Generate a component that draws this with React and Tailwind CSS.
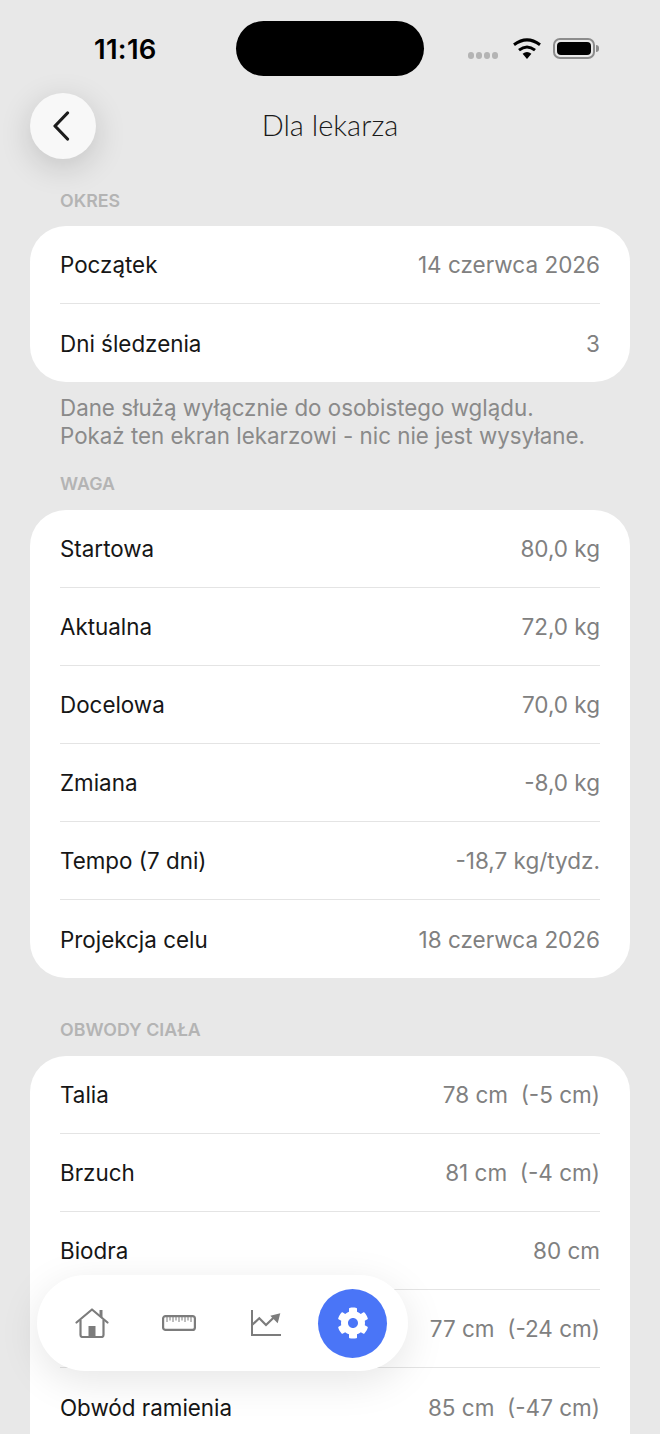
import { FaCog } from 'react-icons/fa'

const Row = ({ label, value, last }) => (
	<div className={`h-[78px] pt-[1px] flex justify-between items-center ${last ? '' : 'border-b border-[#e4e4e4]'}`}>
		<span className='text-[22.4px] text-[#161616]'>{label}</span>
		<span className='text-[22.5px] text-[#808080] whitespace-pre'>{value}</span>
	</div>
)

const Card = ({ rows, open }) => (
	<div className={`mx-[30px] px-[30px] bg-white ${open ? 'rounded-t-[36px]' : 'rounded-[36px]'}`}>
		{rows.map((r, i) => (
			<Row key={r[0]} label={r[0]} value={r[1]} last={i === rows.length - 1} />
		))}
	</div>
)

const Label = ({ children, className }) => (
	<div className={`px-[60px] text-[17.8px] leading-[20px] font-semibold text-[#b4b4b4] ${className}`}>{children}</div>
)

const HomeIcon = () => (
	<svg width='34' height='30' viewBox='0 0 34 30' fill='none'>
		<path d='M1.5 14.5 L17 1.5 L32.5 14.5' stroke='#7c7c7c' strokeWidth='2.2' strokeLinecap='round' strokeLinejoin='round' />
		<path d='M26 2 V9' stroke='#7c7c7c' strokeWidth='3' />
		<path d='M5.5 12 V27 Q5.5 29 7.5 29 H26.5 Q28.5 29 28.5 27 V12' stroke='#7c7c7c' strokeWidth='2.2' />
		<rect x='13.5' y='18' width='7' height='11' fill='#7c7c7c' />
	</svg>
)

const RulerIcon = () => (
	<svg width='34' height='16' viewBox='0 0 34 16' fill='none'>
		<rect x='1.1' y='1.1' width='31.8' height='13.8' rx='2.5' stroke='#7c7c7c' strokeWidth='2.2' />
		<path d='M5 2v5M8 2v3.5M11 2v5M14 2v3.5M17 2v5M20 2v3.5M23 2v5M26 2v3.5M29 2v5' stroke='#7c7c7c' strokeWidth='1' />
	</svg>
)

const ChartIcon = () => (
	<svg width='30' height='26' viewBox='0 0 30 26' fill='none'>
		<path d='M1 0 V25 H30' stroke='#7c7c7c' strokeWidth='2' />
		<path d='M1 15 L8.3 8.3 L15 15 L23.3 7' stroke='#7c7c7c' strokeWidth='2.2' />
		<path d='M19.3 5.7 L29.3 3.3 L26.7 13.3 Z' fill='#7c7c7c' />
	</svg>
)

const WifiIcon = () => (
	<svg width='28' height='21' viewBox='0 0 28 21'>
		<path d='M14 21 L9.6 15.7 Q14 12.4 18.4 15.7 Z' fill='#000' />
		<path d='M6 12.2 Q14 5.8 22 12.2' fill='none' stroke='#000' strokeWidth='3' />
		<path d='M1 6.8 Q14 -3 27 6.8' fill='none' stroke='#000' strokeWidth='3' />
	</svg>
)

const App = () => {
	return (
		<div className="relative w-[660px] h-[1434px] overflow-hidden bg-[#e8e8e8] font-['Inter',sans-serif]">
			<div className='h-[93px] relative'>
				<span className='absolute left-[94px] top-[32px] text-[27.5px] leading-[34px] font-semibold text-black tracking-[0.3px]'>11:16</span>
				<div className='absolute left-[236px] top-[21px] w-[188px] h-[55px] bg-black rounded-full' />
				<div className='absolute left-[468px] top-[52px] flex gap-[2px]'>
					<div className='w-[6px] h-[7px] rounded-full bg-[#b4b4b4]' />
					<div className='w-[6px] h-[7px] rounded-full bg-[#b4b4b4]' />
					<div className='w-[6px] h-[7px] rounded-full bg-[#b4b4b4]' />
					<div className='w-[6px] h-[7px] rounded-full bg-[#b4b4b4]' />
				</div>
				<div className='absolute left-[513px] top-[38px]'>
					<WifiIcon />
				</div>
				<div className='absolute left-[553px] top-[38px] w-[42px] h-[21px] rounded-[7px] border-2 border-[#8c8c8c] p-[2px]'>
					<div className='w-full h-full bg-black rounded-[4px]' />
				</div>
				<div className='absolute left-[596px] top-[45px] w-[3px] h-[7px] rounded-r bg-[#8c8c8c]' />
			</div>

			<div className='h-[66px] relative flex justify-center items-center'>
				<button className='absolute left-[30px] top-0 w-[66px] h-[66px] rounded-full bg-[#f8f8f8] shadow-[0_8px_32px_rgba(0,0,0,0.16)] flex justify-center items-center'>
					<svg className='mr-[4px]' width='20' height='30' viewBox='0 0 20 30' fill='none'>
						<path d='M16.5 2 L4 15 L16.5 28' stroke='#1c1c1c' strokeWidth='3.2' strokeLinecap='round' strokeLinejoin='round' />
					</svg>
				</button>
				<h1 className="pb-[2px] font-['Lato',sans-serif] font-light text-[29px] text-[#1a1a1a]">Dla lekarza</h1>
			</div>

			<Label className='mt-[32px] mb-[15px]'>OKRES</Label>
			<Card rows={[
				['Początek', '14 czerwca 2026'],
				['Dni śledzenia', '3'],
			]} />
			<p className='mt-[12px] px-[60px] text-[22.35px] leading-[28px] text-[#8a8a8a]'>
				Dane służą wyłącznie do osobistego wglądu.<br />
				Pokaż ten ekran lekarzowi - nic nie jest wysyłane.
			</p>
			<Label className='mt-[24px] mb-[16px]'>WAGA</Label>
			<Card rows={[
				['Startowa', '80,0 kg'],
				['Aktualna', '72,0 kg'],
				['Docelowa', '70,0 kg'],
				['Zmiana', '-8,0 kg'],
				['Tempo (7 dni)', '-18,7 kg/tydz.'],
				['Projekcja celu', '18 czerwca 2026'],
			]} />
			<Label className='mt-[42px] mb-[16px]'>OBWODY CIAŁA</Label>
			<Card open rows={[
				['Talia', '78 cm  (-5 cm)'],
				['Brzuch', '81 cm  (-4 cm)'],
				['Biodra', '80 cm'],
				['', '77 cm  (-24 cm)'],
				['Obwód ramienia', '85 cm  (-47 cm)'],
			]} />

			<div className='absolute left-[37px] top-[1275px] w-[371px] h-[96px] rounded-full bg-white shadow-[0_10px_40px_rgba(0,0,0,0.10)] flex items-center pl-[11px]'>
				<div className='w-[87px] flex justify-center'><HomeIcon /></div>
				<div className='w-[87px] flex justify-center'><RulerIcon /></div>
				<div className='w-[87px] flex justify-center'><ChartIcon /></div>
				<div className='w-[87px] flex justify-center'>
					<div className='w-[69px] h-[69px] rounded-full bg-[#4a75f7] flex justify-center items-center'>
						<FaCog className='text-white text-[32px]' />
					</div>
				</div>
			</div>
		</div>
	)
}

export default App
